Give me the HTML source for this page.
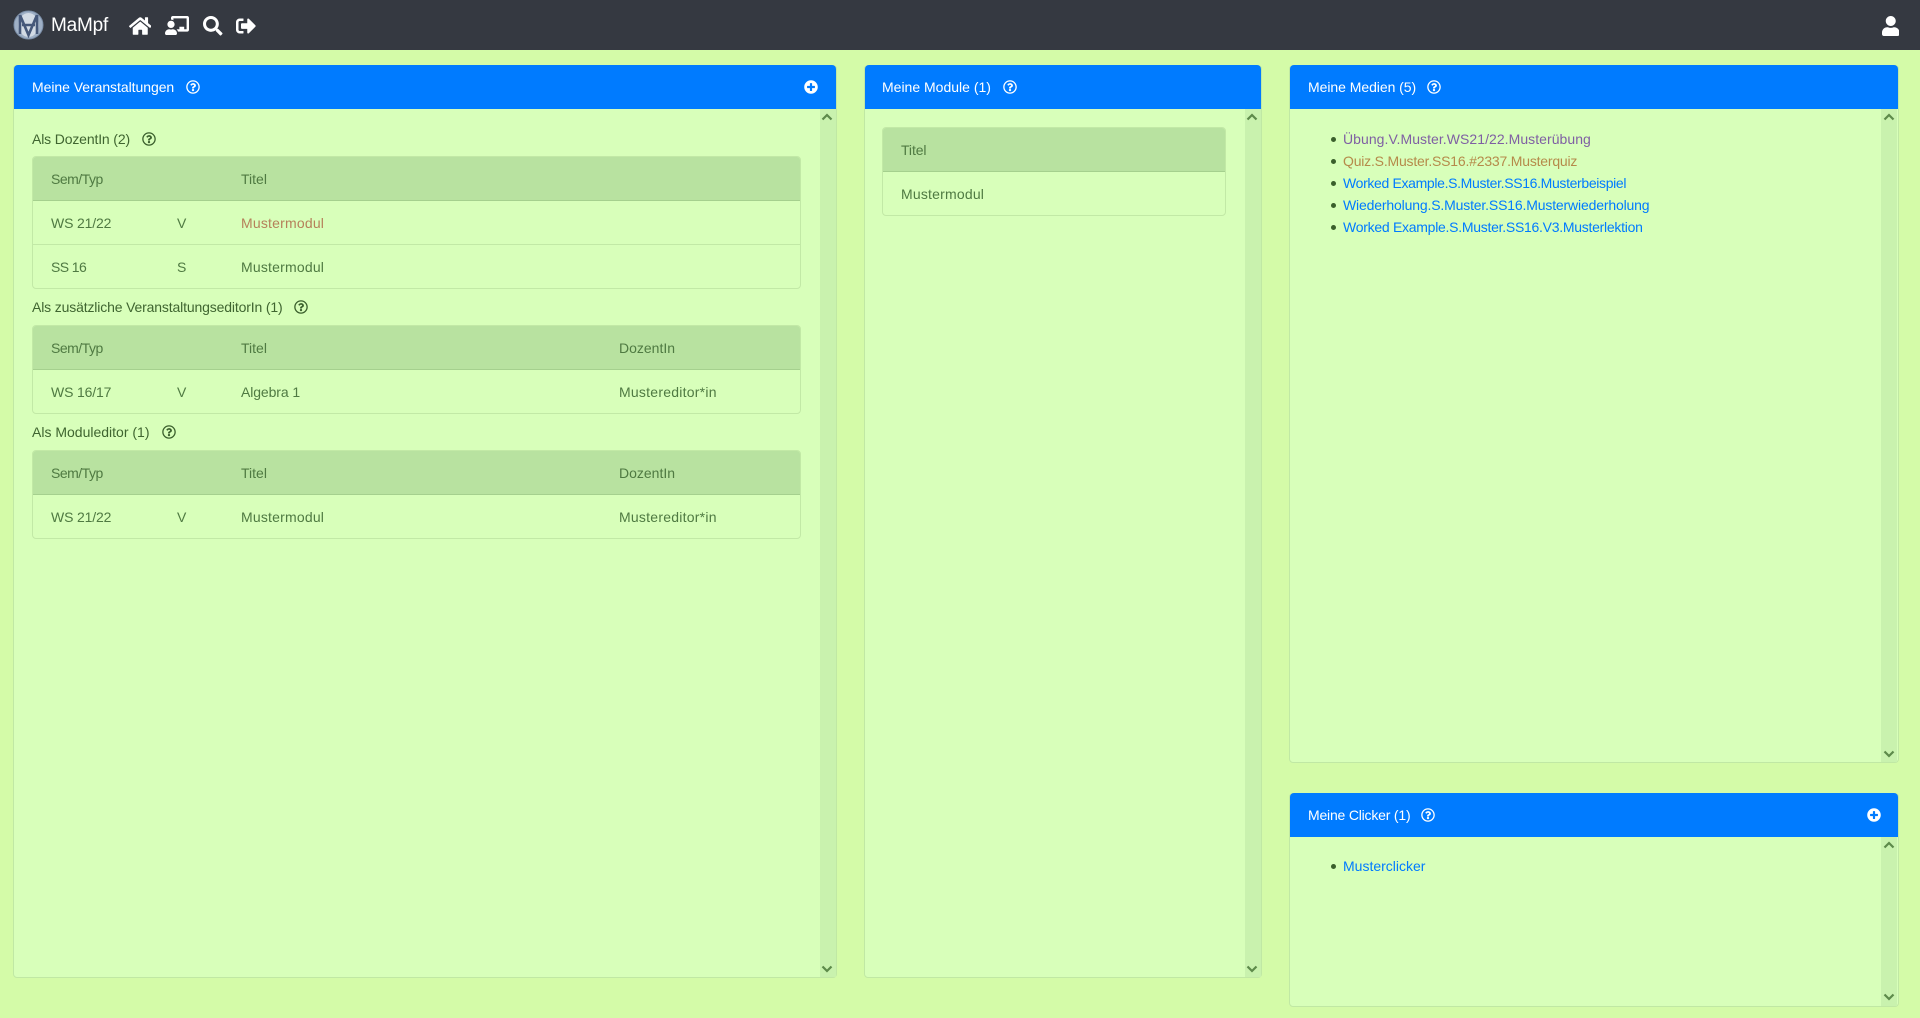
<!DOCTYPE html>
<html lang="de"><head><meta charset="utf-8"><title>MaMpf</title>
<style>
html,body{margin:0;padding:0;width:1920px;height:1018px;overflow:hidden}
body{background:#d4fba8;font-family:"Liberation Sans",sans-serif;font-size:14px;color:#3f6530;position:relative}
.nav{position:absolute;left:0;top:0;width:1920px;height:50px;background:#353941}
.card{position:absolute;background:#d8ffba;border:1px solid #c0e8a4;border-radius:4px;box-sizing:border-box}
.head{position:absolute;background:#007bff;height:44px;border-radius:4px 4px 0 0}
.sb{position:absolute;background:#c9f2ae;width:16px}
.tbl{position:absolute;border:1px solid #c2e9a6;border-radius:4px;box-sizing:border-box;overflow:hidden}
.th{position:absolute;left:0;right:0;top:0;height:44px;background:#b8e2a0;border-bottom:1px solid #a5d08e;box-sizing:border-box}
.ln{position:absolute;left:0;right:0;height:1px;background:#c2e9a6}
.t{position:absolute;line-height:20px;white-space:nowrap}
.w{color:#fff}
.g{color:#4f7a42}
.a{color:#007bff}
svg{position:absolute;display:block}
.b{position:absolute;width:5px;height:5px;border-radius:50%;background:#3a5f2c}
</style></head><body>
<svg width="0" height="0" style="position:absolute"><defs>
<symbol id="q" viewBox="0 0 512 512"><path fill="currentColor" d="M256 8C119.043 8 8 119.083 8 256c0 136.997 111.043 248 248 248s248-111.003 248-248C504 119.083 392.957 8 256 8zm0 448c-110.532 0-200-89.431-200-200 0-110.495 89.472-200 200-200 110.491 0 200 89.471 200 200 0 110.53-89.431 200-200 200zm107.244-255.2c0 67.052-72.421 68.084-72.421 92.863V300c0 6.627-5.373 12-12 12h-45.647c-6.627 0-12-5.373-12-12v-8.659c0-35.745 27.1-50.034 47.579-61.516 17.561-9.845 28.324-16.541 28.324-29.579 0-17.246-21.999-28.693-39.784-28.693-23.189 0-33.894 10.977-48.942 29.969-4.057 5.12-11.46 6.071-16.666 2.124l-27.824-21.098c-5.107-3.872-6.251-11.066-2.644-16.363C184.846 131.491 214.94 112 261.794 112c49.071 0 101.45 38.304 101.45 88.8zM298 368c0 23.159-18.841 42-42 42s-42-18.841-42-42 18.841-42 42-42 42 18.841 42 42z"/></symbol>
<symbol id="p" viewBox="0 0 512 512"><path fill="#fff" d="M256 8C119 8 8 119 8 256s111 248 248 248 248-111 248-248S393 8 256 8zm144 276c0 6.6-5.4 12-12 12h-92v92c0 6.6-5.4 12-12 12h-56c-6.6 0-12-5.4-12-12v-92h-92c-6.6 0-12-5.4-12-12v-56c0-6.6 5.4-12 12-12h92v-92c0-6.6 5.4-12 12-12h56c6.6 0 12 5.4 12 12v92h92c6.6 0 12 5.4 12 12v56z"/></symbol>
<symbol id="up" viewBox="0 0 12 8"><path fill="none" stroke="#5d8a4a" stroke-width="2.2" d="M1.5 6.5L6 2l4.500 4.500"/></symbol>
<symbol id="dn" viewBox="0 0 12 8"><path fill="none" stroke="#5d8a4a" stroke-width="2.2" d="M1.500 1.500L6 6l4.500-4.500"/></symbol>
</defs></svg>

<div class="nav"></div>
<svg style="left:13px;top:10px" width="31" height="30" viewBox="0 0 31 30">
<ellipse cx="15.500" cy="15" rx="14.500" ry="14" fill="#9fb0c6"/>
<ellipse cx="15.500" cy="15" rx="14.500" ry="14" fill="none" stroke="#7c8fa8" stroke-width="1"/>
<ellipse cx="15.500" cy="15" rx="10" ry="12" fill="#d3dbe5"/>
<path d="M7 5v19M24 5v19M7 5l8.500 20L24 5M9 15h13" fill="none" stroke="#46587a" stroke-width="2.600"/>
</svg>
<div class="t w" style="left:51px;top:16px;font-size:19px;letter-spacing:-.2px">MaMpf</div>
<svg style="left:128.500px;top:16px" width="22.500" height="20" viewBox="0 0 576 512"><path fill="#fff" d="M280.37 148.26L96 300.11V464a16 16 0 0 0 16 16l112.06-.29a16 16 0 0 0 15.92-16V368a16 16 0 0 1 16-16h64a16 16 0 0 1 16 16v95.640a16 16 0 0 0 16 16.050L464 480a16 16 0 0 0 16-16V300L295.670 148.260a12.190 12.190 0 0 0-15.300 0zM571.600 251.470L488 182.560V44.050a12 12 0 0 0-12-12h-56a12 12 0 0 0-12 12v72.610L318.470 43a48 48 0 0 0-61 0L4.340 251.470a12 12 0 0 0-1.600 16.900l25.500 31A12 12 0 0 0 45.150 301l235.220-193.740a12.190 12.190 0 0 1 15.300 0L530.900 301a12 12 0 0 0 16.900-1.600l25.500-31a12 12 0 0 0-1.700-16.930z"/></svg>
<svg style="left:165px;top:16px" width="24" height="19.200" viewBox="0 0 640 512"><path fill="#fff" d="M208 352c-2.390 0-4.780.35-7.060 1.090C187.980 357.300 174.350 360 160 360c-14.350 0-27.980-2.700-40.950-6.910-2.280-.74-4.660-1.090-7.050-1.090C49.940 352-.33 402.480 0 464.620.14 490.880 21.730 512 48 512h224c26.270 0 47.860-21.120 48-47.380.33-62.140-49.940-112.620-112-112.620zm-48-32c53.020 0 96-42.980 96-96s-42.980-96-96-96-96 42.980-96 96 42.980 96 96 96zM592 0H208c-26.470 0-48 22.250-48 49.590V96c23.420 0 45.100 6.780 64 17.800V64h352v288h-64v-64H384v64h-76.240c19.100 16.690 33.120 38.730 39.690 64H592c26.470 0 48-22.250 48-49.590V49.590C640 22.250 618.470 0 592 0z"/></svg>
<svg style="left:203px;top:16px" width="19.500" height="19.500" viewBox="0 0 512 512"><path fill="#fff" d="M505 442.700L405.300 343c-4.500-4.500-10.600-7-17-7H372c27.600-35.300 44-79.700 44-128C416 93.100 322.900 0 208 0S0 93.100 0 208s93.100 208 208 208c48.300 0 92.700-16.400 128-44v16.300c0 6.400 2.500 12.500 7 17l99.700 99.700c9.400 9.400 24.600 9.400 33.900 0l28.300-28.300c9.400-9.400 9.400-24.600.1-34zM208 336c-70.700 0-128-57.200-128-128 0-70.700 57.200-128 128-128 70.700 0 128 57.200 128 128 0 70.700-57.200 128-128 128z"/></svg>
<svg style="left:236px;top:16px" width="20" height="20" viewBox="0 0 512 512"><path fill="#fff" d="M497 273L329 441c-15 15-41 4.500-41-17v-96H152c-13.300 0-24-10.700-24-24v-96c0-13.300 10.700-24 24-24h136V88c0-21.400 25.900-32 41-17l168 168c9.300 9.400 9.300 24.600 0 34zM192 436v-40c0-6.600-5.400-12-12-12H96c-17.700 0-32-14.300-32-32V160c0-17.700 14.300-32 32-32h84c6.600 0 12-5.400 12-12V76c0-6.600-5.400-12-12-12H96c-53 0-96 43-96 96v192c0 53 43 96 96 96h84c6.600 0 12-5.400 12-12z"/></svg>
<svg style="left:1881.500px;top:16px" width="17.500" height="20" viewBox="0 0 448 512"><path fill="#fff" d="M224 256c70.700 0 128-57.300 128-128S294.700 0 224 0 96 57.300 96 128s57.300 128 128 128zm89.600 32h-16.700c-22.200 10.200-46.900 16-72.900 16s-50.600-5.800-72.900-16h-16.700C60.200 288 0 348.200 0 422.400V464c0 26.500 21.500 48 48 48h352c26.500 0 48-21.500 48-48v-41.600c0-74.200-60.200-134.400-134.400-134.400z"/></svg>

<!-- Card 1 -->
<div class="card" style="left:13px;top:65px;width:824px;height:913px"></div>
<div class="sb" style="left:820px;top:109px;height:868px"></div>
<div class="head" style="left:14px;top:65px;width:822px"></div>
<div class="t w" style="left:32px;top:77px;letter-spacing:-.05px">Meine Veranstaltungen</div>
<svg class="w" style="left:186px;top:80px" width="14" height="14"><use href="#q"/></svg>
<svg style="left:804px;top:80px" width="14" height="14"><use href="#p"/></svg>
<svg style="left:821px;top:113px" width="12" height="8"><use href="#up"/></svg>
<svg style="left:821px;top:965px" width="12" height="8"><use href="#dn"/></svg>

<div class="t" style="left:32px;top:129px;letter-spacing:-.15px">Als DozentIn (2)</div>
<svg style="left:142px;top:132px;color:#3a5f2c" width="14" height="14"><use href="#q"/></svg>
<div class="tbl" style="left:32px;top:156px;width:769px;height:133px"><div class="th"></div><div class="ln" style="top:87px"></div></div>
<div class="t g" style="left:51px;top:169px;letter-spacing:-.5px">Sem/Typ</div>
<div class="t g" style="left:241px;top:169px">Titel</div>
<div class="t g" style="left:51px;top:213px;letter-spacing:-.15px">WS 21/22</div>
<div class="t g" style="left:177px;top:213px">V</div>
<div class="t" style="left:241px;top:213px;color:#b5805a;letter-spacing:.2px">Mustermodul</div>
<div class="t g" style="left:51px;top:257px;letter-spacing:-.6px">SS 16</div>
<div class="t g" style="left:177px;top:257px">S</div>
<div class="t g" style="left:241px;top:257px;letter-spacing:.2px">Mustermodul</div>

<div class="t" style="left:32px;top:297px;letter-spacing:-.15px">Als zusätzliche VeranstaltungseditorIn (1)</div>
<svg style="left:294px;top:300px;color:#3a5f2c" width="14" height="14"><use href="#q"/></svg>
<div class="tbl" style="left:32px;top:325px;width:769px;height:89px"><div class="th"></div></div>
<div class="t g" style="left:51px;top:338px;letter-spacing:-.5px">Sem/Typ</div>
<div class="t g" style="left:241px;top:338px">Titel</div>
<div class="t g" style="left:619px;top:338px">DozentIn</div>
<div class="t g" style="left:51px;top:382px;letter-spacing:-.15px">WS 16/17</div>
<div class="t g" style="left:177px;top:382px">V</div>
<div class="t g" style="left:241px;top:382px;letter-spacing:-.1px">Algebra 1</div>
<div class="t g" style="left:619px;top:382px;letter-spacing:.24px">Mustereditor*in</div>

<div class="t" style="left:32px;top:422px">Als Moduleditor (1)</div>
<svg style="left:162px;top:425px;color:#3a5f2c" width="14" height="14"><use href="#q"/></svg>
<div class="tbl" style="left:32px;top:450px;width:769px;height:89px"><div class="th"></div></div>
<div class="t g" style="left:51px;top:463px;letter-spacing:-.5px">Sem/Typ</div>
<div class="t g" style="left:241px;top:463px">Titel</div>
<div class="t g" style="left:619px;top:463px">DozentIn</div>
<div class="t g" style="left:51px;top:507px;letter-spacing:-.15px">WS 21/22</div>
<div class="t g" style="left:177px;top:507px">V</div>
<div class="t g" style="left:241px;top:507px;letter-spacing:.2px">Mustermodul</div>
<div class="t g" style="left:619px;top:507px;letter-spacing:.24px">Mustereditor*in</div>

<!-- Card 2 -->
<div class="card" style="left:864px;top:65px;width:398px;height:913px"></div>
<div class="sb" style="left:1245px;top:109px;height:868px"></div>
<div class="head" style="left:865px;top:65px;width:396px"></div>
<div class="t w" style="left:882px;top:77px">Meine Module (1)</div>
<svg class="w" style="left:1003px;top:80px" width="14" height="14"><use href="#q"/></svg>
<svg style="left:1246px;top:113px" width="12" height="8"><use href="#up"/></svg>
<svg style="left:1246px;top:965px" width="12" height="8"><use href="#dn"/></svg>
<div class="tbl" style="left:882px;top:127px;width:344px;height:89px"><div class="th"></div></div>
<div class="t g" style="left:901px;top:140px;letter-spacing:-.1px">Titel</div>
<div class="t g" style="left:901px;top:184px;letter-spacing:.2px">Mustermodul</div>

<!-- Card 3 -->
<div class="card" style="left:1289px;top:65px;width:610px;height:698px"></div>
<div class="sb" style="left:1881px;top:109px;height:653px"></div>
<div class="head" style="left:1290px;top:65px;width:608px"></div>
<div class="t w" style="left:1308px;top:77px;letter-spacing:-.05px">Meine Medien (5)</div>
<svg class="w" style="left:1427px;top:80px" width="14" height="14"><use href="#q"/></svg>
<svg style="left:1883px;top:113px" width="12" height="8"><use href="#up"/></svg>
<svg style="left:1883px;top:750px" width="12" height="8"><use href="#dn"/></svg>
<div class="b" style="left:1331px;top:137px"></div>
<div class="b" style="left:1331px;top:159px"></div>
<div class="b" style="left:1331px;top:181px"></div>
<div class="b" style="left:1331px;top:203px"></div>
<div class="b" style="left:1331px;top:225px"></div>
<div class="t" style="left:1343px;top:129px;color:#7f5fa3;letter-spacing:.05px">Übung.V.Muster.WS21/22.Musterübung</div>
<div class="t" style="left:1343px;top:151px;color:#b58a4a;letter-spacing:-.2px">Quiz.S.Muster.SS16.#2337.Musterquiz</div>
<div class="t a" style="left:1343px;top:173px;letter-spacing:-.34px">Worked Example.S.Muster.SS16.Musterbeispiel</div>
<div class="t a" style="left:1343px;top:195px;letter-spacing:-.16px">Wiederholung.S.Muster.SS16.Musterwiederholung</div>
<div class="t a" style="left:1343px;top:217px;letter-spacing:-.27px">Worked Example.S.Muster.SS16.V3.Musterlektion</div>

<!-- Card 4 -->
<div class="card" style="left:1289px;top:793px;width:610px;height:214px"></div>
<div class="sb" style="left:1881px;top:837px;height:169px"></div>
<div class="head" style="left:1290px;top:793px;width:608px"></div>
<div class="t w" style="left:1308px;top:805px;letter-spacing:-.2px">Meine Clicker (1)</div>
<svg class="w" style="left:1421px;top:808px" width="14" height="14"><use href="#q"/></svg>
<svg style="left:1867px;top:808px" width="14" height="14"><use href="#p"/></svg>
<svg style="left:1883px;top:841px" width="12" height="8"><use href="#up"/></svg>
<svg style="left:1883px;top:993px" width="12" height="8"><use href="#dn"/></svg>
<div class="b" style="left:1331px;top:864px"></div>
<div class="t a" style="left:1343px;top:856px">Musterclicker</div>
</body></html>
